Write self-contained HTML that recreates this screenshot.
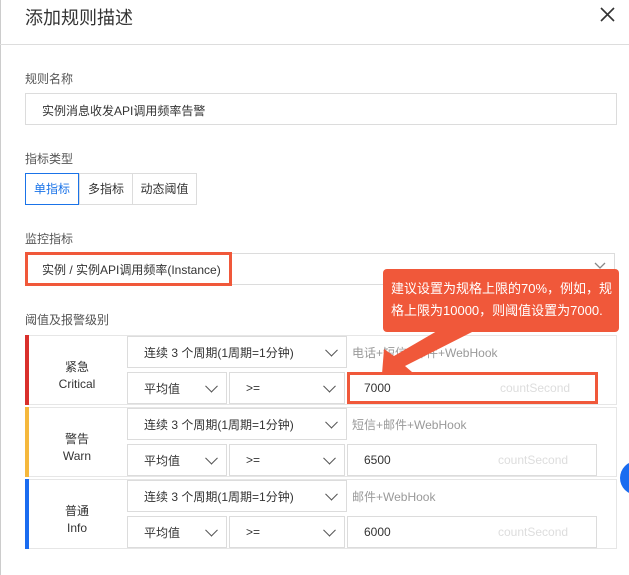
<!DOCTYPE html>
<html><head><meta charset="utf-8"><style>
*{box-sizing:border-box;margin:0;padding:0}
body{width:629px;height:575px;background:#fff;font-family:"Liberation Sans","Noto Sans CJK SC",sans-serif;position:relative;overflow:hidden;color:#333;font-size:12px}
.a{position:absolute}
.lbl{position:absolute;left:25px;font-size:12px;color:#555}
.box{position:absolute;border:1px solid #dcdcdc;background:#fff}
.sel{position:absolute;border:1px solid #dcdcdc;background:#fff;font-size:12px;color:#333;padding-left:16px;display:flex;align-items:center}
.chev{position:absolute;right:10px;top:50%;width:9px;height:9px;border-right:1.5px solid #555;border-bottom:1.5px solid #555;transform:translateY(-70%) rotate(45deg)}
.row{position:absolute;left:25px;width:592px;border:1px solid #e6e6e6}
.bar{position:absolute;left:-1px;top:-1px;bottom:-1px;width:4px}
.nm{position:absolute;left:0;width:102px;text-align:center;font-size:12px;color:#333;line-height:17px}
.grey{color:#999}
</style></head><body>
<div class="a" style="left:0;top:0;width:1px;height:575px;background:#ccc"></div>
<div class="a" style="left:25px;top:4px;font-size:18px;color:#333">添加规则描述</div>
<svg class="a" style="left:600px;top:7px" width="15" height="15"><path d="M1 1L14 14M14 1L1 14" stroke="#333" stroke-width="1.6"/></svg>
<div class="a" style="left:0;top:44px;width:629px;height:1px;background:#ddd"></div>

<div class="lbl" style="top:70px">规则名称</div>
<div class="box" style="left:25px;top:93px;width:592px;height:32px;padding:8px 16px;color:#333">实例消息收发API调用频率告警</div>

<div class="lbl" style="top:150px">指标类型</div>
<div class="box" style="left:79px;top:173px;width:54px;height:32px;text-align:center;line-height:30px">多指标</div>
<div class="box" style="left:132px;top:173px;width:65px;height:32px;text-align:center;line-height:30px">动态阈值</div>
<div class="box" style="left:25px;top:173px;width:54px;height:32px;text-align:center;line-height:30px;border-color:#1a73e8;color:#1a73e8">单指标</div>

<div class="lbl" style="top:230px">监控指标</div>
<div class="box" style="left:25px;top:253px;width:590px;height:32px"></div>
<svg class="a" style="left:594px;top:262px" width="12" height="8"><path d="M1 1L6 6L11 1" stroke="#888" fill="none" stroke-width="1.3"/></svg>
<div class="a" style="left:25px;top:252px;width:207px;height:34px;border:3px solid #f0583a;padding:6px 0 0 14px;font-size:12px">实例 / 实例API调用频率(Instance)</div>

<div class="lbl" style="top:311px">阈值及报警级别</div>

<div class="row" style="top:335px;height:70px"><div class="bar" style="background:#d9302c"></div><div class="nm" style="top:23px">紧急<br>Critical</div></div>
<div class="row" style="top:407px;height:70px"><div class="bar" style="background:#f5b83d"></div><div class="nm" style="top:23px">警告<br>Warn</div></div>
<div class="row" style="top:479px;height:70px"><div class="bar" style="background:#1a6cf0"></div><div class="nm" style="top:23px">普通<br>Info</div></div>

<div class="sel" style="left:127px;top:336px;width:220px;height:32px">连续 3 个周期(1周期=1分钟)<span class="chev"></span></div>
<div class="sel" style="left:127px;top:372px;width:100px;height:32px">平均值<span class="chev"></span></div>
<div class="sel" style="left:229px;top:372px;width:116px;height:32px">&gt;=<span class="chev"></span></div>
<div class="a grey" style="left:352px;top:344px">电话+短信+邮件+WebHook</div>
<div class="a" style="left:347px;top:372px;width:251px;height:32px;border:3px solid #f0583a;padding:6px 0 0 14px">7000<span class="a" style="left:150px;top:6px;color:#ddd">countSecond</span></div>

<div class="sel" style="left:127px;top:408px;width:220px;height:32px">连续 3 个周期(1周期=1分钟)<span class="chev"></span></div>
<div class="sel" style="left:127px;top:444px;width:100px;height:32px">平均值<span class="chev"></span></div>
<div class="sel" style="left:229px;top:444px;width:116px;height:32px">&gt;=<span class="chev"></span></div>
<div class="a grey" style="left:352px;top:416px">短信+邮件+WebHook</div>
<div class="box" style="left:347px;top:444px;width:250px;height:32px;padding:8px 0 0 16px">6500<span class="a" style="left:150px;top:8px;color:#ddd">countSecond</span></div>

<div class="sel" style="left:127px;top:480px;width:220px;height:32px">连续 3 个周期(1周期=1分钟)<span class="chev"></span></div>
<div class="sel" style="left:127px;top:516px;width:100px;height:32px">平均值<span class="chev"></span></div>
<div class="sel" style="left:229px;top:516px;width:116px;height:32px">&gt;=<span class="chev"></span></div>
<div class="a grey" style="left:352px;top:488px">邮件+WebHook</div>
<div class="box" style="left:347px;top:516px;width:250px;height:32px;padding:8px 0 0 16px">6000<span class="a" style="left:150px;top:8px;color:#ddd">countSecond</span></div>

<div class="a" style="left:383px;top:269px;width:236px;height:63px;background:#f0583a;border-radius:4px;color:#fff;font-size:13px;line-height:22px;padding:9px 0 0 8px;white-space:nowrap">建议设置为规格上限的70%，例如，规<br>格上限为10000，则阈值设置为7000.</div>
<svg class="a" style="left:0;top:0" width="629" height="575"><polygon points="382,374 384,349 394,356 437,331 474,331 405,366 412,372" fill="#f0583a"/></svg>

<div class="a" style="left:620px;top:461px;width:34px;height:34px;border-radius:50%;background:#1a6cf0"></div>
</body></html>
